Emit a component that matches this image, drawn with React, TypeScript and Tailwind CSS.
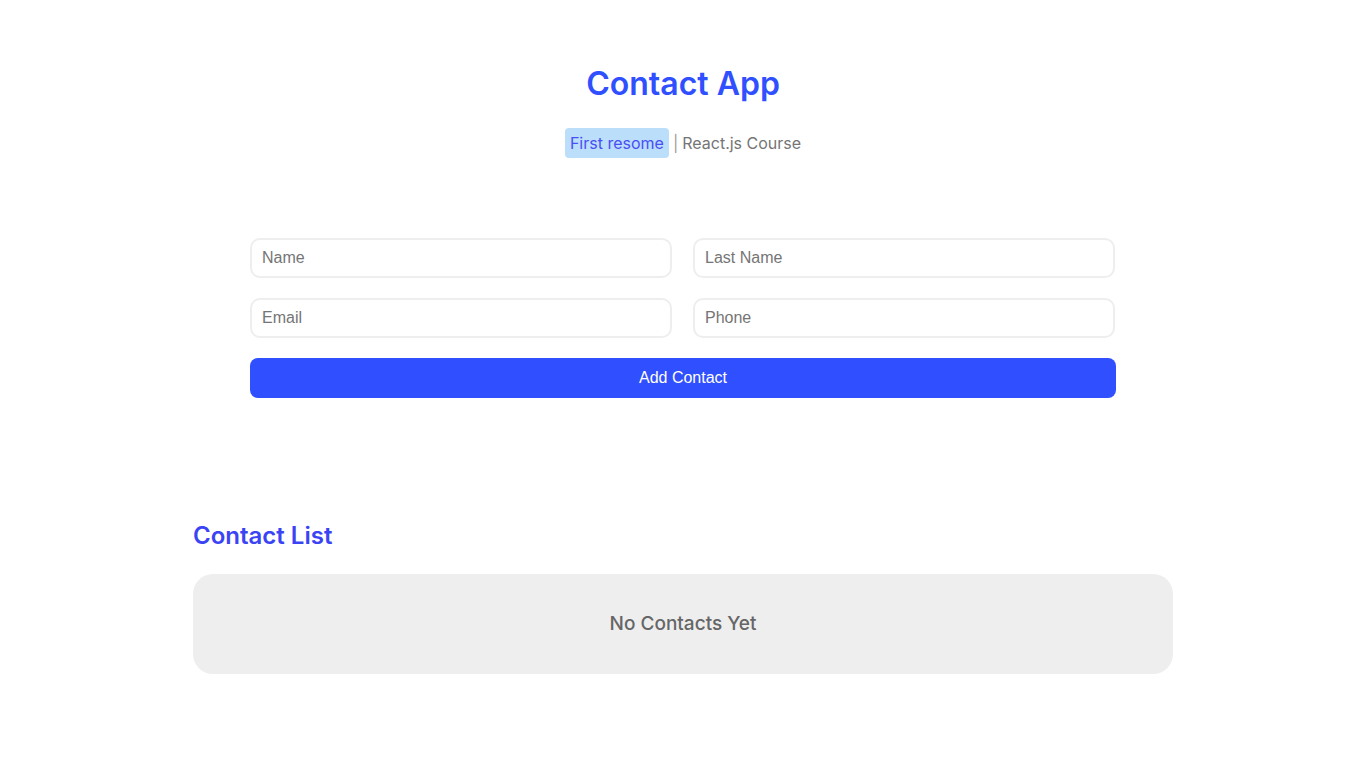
import React, { useState } from 'react';

const inputClass =
  "h-10 w-full rounded-[10px] border-2 border-[#eeeeee] bg-white px-[10px] font-['Liberation_Sans',Arial,sans-serif] text-base text-[#333] outline-none placeholder:text-[#757575]";

export default function App() {
  const [form, setForm] = useState({ name: '', lastName: '', email: '', phone: '' });

  const update = (key: keyof typeof form) => (e: React.ChangeEvent<HTMLInputElement>) =>
    setForm({ ...form, [key]: e.target.value });

  return (
    <div className="min-h-screen bg-white font-['Inter',sans-serif]">
      {/* Header */}
      <header className="flex flex-col items-center pt-[64px]">
        <h1 className="text-[32px] leading-[40px] font-semibold text-[#304ffe]">Contact App</h1>
        <p className="mt-[24px] flex items-center text-base leading-[22px] text-[#757575]">
          <span className="rounded-[4px] bg-[#bbdefb] px-[5px] py-[4px] text-[#4a4ff5]">First resome</span>
          <span className="mx-[4px] text-[#9e9e9e]">|</span>
          <span>React.js Course</span>
        </p>
      </header>

      {/* Form */}
      <div className="mx-auto mt-[80px] w-[866px]">
        <div className="grid grid-cols-[422px_422px] gap-x-[21px] gap-y-[20px]">
          <input className={inputClass} placeholder="Name" value={form.name} onChange={update('name')} />
          <input className={inputClass} placeholder="Last Name" value={form.lastName} onChange={update('lastName')} />
          <input className={inputClass} placeholder="Email" value={form.email} onChange={update('email')} />
          <input className={inputClass} placeholder="Phone" value={form.phone} onChange={update('phone')} />
        </div>
        <button className="mt-[20px] h-10 w-full rounded-[8px] bg-[#304ffe] font-['Liberation_Sans',Arial,sans-serif] text-base text-white">
          Add Contact
        </button>
      </div>

      {/* Contact list */}
      <section className="mx-auto mt-[122px] w-[980px]">
        <h3 className="text-[24px] leading-[32px] font-semibold text-[#3a44f5]">Contact List</h3>
        <div className="mt-[22px] flex h-[100px] items-center justify-center rounded-[20px] bg-[#eeeeee]">
          <p className="text-[19px] font-medium text-[#666666]">No Contacts Yet</p>
        </div>
      </section>
    </div>
  );
}
